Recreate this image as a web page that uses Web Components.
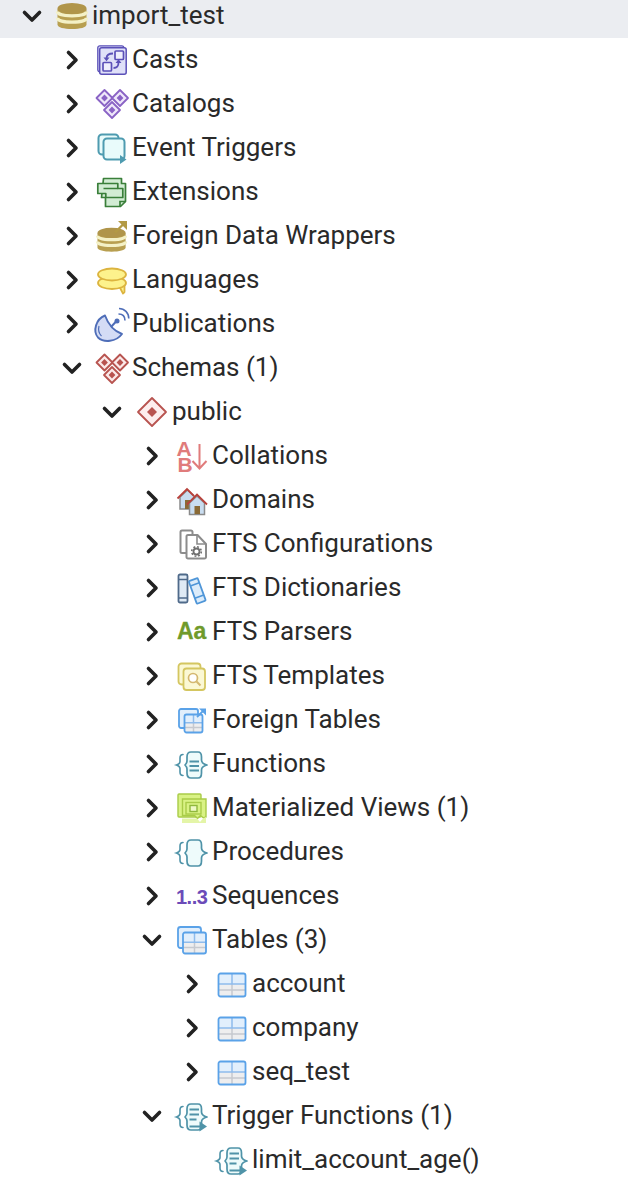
<!DOCTYPE html>
<html>
<head>
<meta charset="utf-8">
<style>
    html, body { margin: 0; padding: 0; background: #fff; overflow: hidden; }
</style>
</head>
<body>
<tree-view>
    <tree-node icon="database" open selected>import_test
        <tree-group slot="kids">
            <tree-node icon="casts">Casts</tree-node>
            <tree-node icon="catalogs">Catalogs</tree-node>
            <tree-node icon="eventTriggers">Event Triggers</tree-node>
            <tree-node icon="extensions">Extensions</tree-node>
            <tree-node icon="fdw">Foreign Data Wrappers</tree-node>
            <tree-node icon="languages">Languages</tree-node>
            <tree-node icon="publications">Publications</tree-node>
            <tree-node icon="schemas" open>Schemas (1)
                <tree-group slot="kids">
                    <tree-node icon="schema" open>public
                        <tree-group slot="kids">
                            <tree-node icon="collations">Collations</tree-node>
                            <tree-node icon="domains">Domains</tree-node>
                            <tree-node icon="ftsConfig">FTS Configurations</tree-node>
                            <tree-node icon="ftsDict">FTS Dictionaries</tree-node>
                            <tree-node icon="ftsParser">FTS Parsers</tree-node>
                            <tree-node icon="ftsTemplate">FTS Templates</tree-node>
                            <tree-node icon="foreignTables">Foreign Tables</tree-node>
                            <tree-node icon="functions">Functions</tree-node>
                            <tree-node icon="matViews">Materialized Views (1)</tree-node>
                            <tree-node icon="procedures">Procedures</tree-node>
                            <tree-node icon="sequences">Sequences</tree-node>
                            <tree-node icon="tables" open>Tables (3)
                                <tree-group slot="kids">
                                    <tree-node icon="table">account</tree-node>
                                    <tree-node icon="table">company</tree-node>
                                    <tree-node icon="table">seq_test</tree-node>
                                </tree-group>
                            </tree-node>
                            <tree-node icon="triggerFunctions" open>Trigger Functions (1)
                                <tree-group slot="kids">
                                    <tree-node icon="triggerFunction" leaf>limit_account_age()</tree-node>
                                </tree-group>
                            </tree-node>
                        </tree-group>
                    </tree-node>
                </tree-group>
            </tree-node>
        </tree-group>
    </tree-node>
</tree-view>

<script>
    // small helpers for repeated icon parts
    const diamond = (x, y, r, stroke, fill, inner) => `
        <path d="M${x} ${y - r}L${x + r} ${y}L${x} ${y + r}L${x - r} ${y}Z" fill="${fill}" stroke="${stroke}" stroke-width="1.8" stroke-linejoin="round"/>
        <path d="M${x} ${y - inner}L${x + inner} ${y}L${x} ${y + inner}L${x - inner} ${y}Z" fill="${stroke}"/>`;

    const grid = (x, y, w, h) => {
        const cx = x + w / 2, sep = y + h * 0.46, low = y + h * 0.72;
        return `
        <rect x="${x}" y="${y}" width="${w}" height="${h}" rx="2" fill="#e2effc"/>
        <rect x="${x}" y="${sep}" width="${w}" height="${h - h * 0.46}" fill="#eeeeef"/>
        <path d="M${x} ${low}H${x + w}M${cx} ${sep}V${y + h}" stroke="#c6c9cf" stroke-width="1.5"/>
        <path d="M${x} ${sep}H${x + w}M${cx} ${y}V${sep}" stroke="#8fbcec" stroke-width="1.5"/>
        <rect x="${x}" y="${y}" width="${w}" height="${h}" rx="2" fill="none" stroke="#5aa2e8" stroke-width="1.8"/>`;
    };

    const db = `
        <path d="M.5 8v15.500c0 3 6.500 4.500 14.500 4.500s14.500-1.500 14.500-4.500V8z" fill="#b89f50"/>
        <path d="M.5 10.500c0 3 6.500 4.300 14.500 4.300s14.500-1.300 14.500-4.300M.5 16.800c0 3 6.500 4.400 14.500 4.400s14.500-1.400 14.500-4.400" fill="none" stroke="#f4f1c6" stroke-width="3.300"/>
        <ellipse cx="15" cy="7.500" rx="14.500" ry="5.500" fill="#b0954a"/>`;

    const braceBody = `
        <path d="M6 5.500C3.500 5.500 3 7 3 9v3.500c0 1.800-1.300 2.800-3.500 3.500 2.200.7 3.500 1.700 3.500 3.500V23c0 2 .5 3.500 3 3.500" fill="none" stroke="#4f93a8" stroke-width="1.600" stroke-linecap="round"/>
        <path d="M14 3h7c3 0 3.500 2 3.500 5v3c0 2.500 1.500 4 5.500 5-4 1-5.500 2.500-5.500 5v3c0 3-.5 5-3.500 5h-7c-3 0-4-2-4-5v-4c0-2-1-3-2-4 1-1 2-2 2-4V8c0-3 1-5 4-5z" fill="#eefbfb" stroke="#4f93a8" stroke-width="1.700" stroke-linejoin="round"/>`;

    const funcLines = `<path d="M12.500 12.500h9.500M12.500 17h9.500M12.500 21.500h9.500" stroke="#4f93a8" stroke-width="2" fill="none"/>`;
    const triggerLines = `<path d="M12.500 8.500h9.500M12.500 13.500h9.500M12.500 18.500h7M12.500 25.500h10.500" stroke="#4f93a8" stroke-width="2" fill="none"/><path d="M22.500 20.500L30 25.500l-7.500 5z" fill="#4f93a8"/>`;

    const ICONS = {
        database: db,
        casts: `
            <rect x=".8" y=".8" width="26" height="26" rx="2" fill="#dfe0f8" stroke="#5b50b8" stroke-width="1.300"/>
            <rect x="2.700" y="2.700" width="26.500" height="26.500" rx="2" fill="#dfe0f8" stroke="#5b50b8" stroke-width="1.500"/>
            <rect x="18" y="6" width="8.500" height="8.500" rx="1" fill="#eeeefc" stroke="#5b50b8" stroke-width="1.700"/>
            <rect x="6" y="17.500" width="8.500" height="8.500" rx="1" fill="#eeeefc" stroke="#5b50b8" stroke-width="1.700"/>
            <path d="M9.500 13.500c0-3 2.500-5 6.500-5M21.500 17.500c0 3.500-2 5.500-5 5.500" fill="none" stroke="#5b50b8" stroke-width="1.800"/>
            <path d="M6.500 12.500l3 3.800 3-3.800zM18.500 18h6l-3-3.800z" fill="#5b50b8"/>`,
        catalogs: diamond(7.5, 9, 8, '#8a63c5', '#efe8fa', 3.4) + diamond(23, 9, 8, '#8a63c5', '#efe8fa', 3.4) + diamond(15, 21, 8, '#8a63c5', '#efe8fa', 3.4),
        eventTriggers: `
            <rect x="1.500" y="1.500" width="20" height="20" rx="3.500" fill="#e9fbfb" stroke="#4e9bb0" stroke-width="2"/>
            <rect x="6.500" y="5.500" width="21" height="21" rx="3.500" fill="#e9fbfb" stroke="#4e9bb0" stroke-width="2"/>
            <path d="M23 22l6.500 4.500-6.500 4.500z" fill="#4e9bb0"/>`,
        extensions: `
            <path d="M6.500 1.500h18v5h4v18l-5 5h-15v-9h-4z" fill="#d2ecd4" stroke="#3a7f3a" stroke-width="1.700" stroke-linejoin="round"/>
            <path d="M.8 6.500h20v5h5v9h-17v-4h-8z" fill="#d2ecd4" stroke="#3a7f3a" stroke-width="1.700" stroke-linejoin="round"/>
            <path d="M6.500 11.500h14M23 29.500v-5h5.500" fill="none" stroke="#3a7f3a" stroke-width="1.700"/>`,
        fdw: `
            <g transform="translate(0 5) scale(.97 .92)">${db}</g>
            <path d="M18 11.500l8-8" stroke="#b39a45" stroke-width="2.400"/>
            <path d="M21 0h9v9z" fill="#b39a45"/>`,
        languages: `
            <path d="M22 21l4 7.500 1.500-1.500V19z" fill="#fdf28c" stroke="#dcb43f" stroke-width="1.800" stroke-linejoin="round"/>
            <ellipse cx="15" cy="18" rx="14" ry="6" fill="#fdf28c" stroke="#dcb43f" stroke-width="1.800"/>
            <ellipse cx="15" cy="9.500" rx="14" ry="6" fill="#fdf28c" stroke="#dcb43f" stroke-width="1.800"/>`,
        publications: `
            <path d="M8 6.500C-1 10-4.500 22 1 28.500 7 34 19 33 25 25 17 22 11 15 8 6.500z" fill="#d4dcf5" stroke="#4f6eb8" stroke-width="1.900" stroke-linejoin="round"/>
            <path d="M2 17c-1 4 0 7.500 2.500 10" fill="none" stroke="#4f6eb8" stroke-width="1.200"/>
            <path d="M14 18l5.500-6" stroke="#4f6eb8" stroke-width="2"/>
            <circle cx="20" cy="12" r="2.500" fill="#4f6eb8"/>
            <path d="M21.500 5c4 0 6.500 2.500 6.500 6.500M22 -.5c5.500 0 9.800 4.300 9.800 10" fill="none" stroke="#4f6eb8" stroke-width="1.600"/>`,
        schemas: diamond(7.5, 9.5, 8, '#b85450', '#fbeaea', 3.4) + diamond(23, 9.5, 8, '#b85450', '#fbeaea', 3.4) + diamond(15, 22, 8, '#b85450', '#fbeaea', 3.4),
        schema: diamond(15, 15, 14, '#b85450', '#fdeeee', 5),
        // single text node, each glyph placed on its own line
        collations: `
            <text x="-.5 .5" y="15 31" font-family="Liberation Sans" font-weight="700" font-size="21" fill="#e07b7b">AB</text>
            <path d="M22.500 3v24M15.500 20l7 7.500 7-7.500" fill="none" stroke="#e07b7b" stroke-width="2"/>`,
        domains: `
            <path d="M3 12v12h15V12l-7.500-7z" fill="#c9ddf0" stroke="#8a8a8a" stroke-width="1.500"/>
            <path d="M.5 13.500L10 4l7 7" fill="none" stroke="#b8423c" stroke-width="1.800"/>
            <rect x="8" y="15" width="5" height="9" fill="#8a6a35"/>
            <path d="M12.500 18v11.500h15V18L20 11z" fill="#c9ddf0" stroke="#8a8a8a" stroke-width="1.500"/>
            <path d="M10 19.500L20 9.500l10 10" fill="none" stroke="#b8423c" stroke-width="1.800"/>
            <rect x="17.500" y="21" width="5.500" height="8" fill="#8a6a35"/>`,
        ftsConfig: `
            <path d="M5 1.500h9a1.500 1.500 0 0 1 1.500 1.500v21H5a1.500 1.500 0 0 1-1.500-1.500V3A1.500 1.500 0 0 1 5 1.500z" fill="#fff" stroke="#8c8c8c" stroke-width="2"/>
            <path d="M11 6h9.500l8.500 9v13a1.500 1.500 0 0 1-1.500 1.500H11A1.500 1.500 0 0 1 9.500 28V7.500A1.500 1.500 0 0 1 11 6z" fill="#fff" stroke="#8c8c8c" stroke-width="2" stroke-linejoin="round"/>
            <path d="M20 6v9h9" fill="none" stroke="#8c8c8c" stroke-width="1.600"/>
            <circle cx="19.500" cy="22.500" r="3" fill="none" stroke="#6f6f6f" stroke-width="1.800"/>
            <circle cx="19.500" cy="22.500" r="4.800" fill="none" stroke="#6f6f6f" stroke-width="1.600" stroke-dasharray="1.900 1.870"/>`,
        ftsDict: `
            <rect x="1.500" y="1.500" width="9" height="28" rx="1.500" fill="#dfeaf5" stroke="#4f6a8a" stroke-width="1.800"/>
            <path d="M1.500 6.500h9M1.500 25h9" stroke="#4f6a8a" stroke-width="1.600"/>
            <g transform="rotate(-20 20 18)">
                <rect x="15.500" y="6" width="9.500" height="24" rx="1" fill="#dcecfa" stroke="#4f96d8" stroke-width="1.800"/>
                <path d="M15.500 11h9.500M15.500 24h9.500" stroke="#4f96d8" stroke-width="1.600"/>
            </g>`,
        ftsParser: `<text x="0" y="22" font-family="Liberation Sans" font-weight="700" font-size="23" stroke="#6f9a2b" stroke-width=".3" fill="#6f9a2b">Aa</text>`,
        ftsTemplate: `
            <rect x="1.500" y="2.500" width="22" height="21" rx="3" fill="#fbf8d4" stroke="#d4c660" stroke-width="1.800"/>
            <rect x="6.500" y="7.500" width="21.500" height="21.500" rx="3" fill="#fbf8d4" stroke="#d4c660" stroke-width="1.800"/>
            <circle cx="16" cy="17" r="4.500" fill="#fff" stroke="#d4b870" stroke-width="1.700"/>
            <path d="M19.500 20.500l4 4" stroke="#d4b870" stroke-width="2"/>`,
        foreignTables: `
            <rect x="2" y="4" width="19" height="19" rx="2" fill="#e2effc" stroke="#5aa2e8" stroke-width="1.800"/>
            ${grid(7.500, 9.500, 18, 18)}
            <path d="M20 12l7-7" stroke="#5aa2e8" stroke-width="1.800"/>
            <path d="M22 3.500h7v7z" fill="#5aa2e8"/>`,
        functions: braceBody + funcLines,
        matViews: `
            <rect x="1" y="1" width="23" height="23" rx="1" fill="#d9f285" stroke="#a9cc48" stroke-width="1.400"/>
            <path d="M5.500 6h23.500v18l-2.500 1-3-2.500-3 3-3-3H5.500z" fill="#d9f285" stroke="#a9cc48" stroke-width="1.400"/>
            <rect x="9" y="9.500" width="15" height="11.500" fill="none" stroke="#a9cc48" stroke-width="1.400"/>
            <rect x="13" y="12.500" width="7" height="6" fill="#eef9c4" stroke="#8fb83c" stroke-width="1.400"/>
            <path d="M5 25.500h15l3 3.500 3-3.500 3-1.500v6H5z" fill="#e4f5a8"/>`,
        procedures: braceBody,
        sequences: `<text x="-1" y="23" font-family="Liberation Sans" font-weight="700" font-size="20" letter-spacing="-.5" fill="#6b4bb8">1..3</text>`,
        tables: `
            <rect x="1" y="2" width="23" height="21" rx="2.500" fill="#e2effc" stroke="#5aa2e8" stroke-width="1.800"/>
            ${grid(6, 7.500, 23, 21)}`,
        table: grid(1.500, 4.500, 27, 23),
        triggerFunctions: braceBody + triggerLines,
        triggerFunction: braceBody + triggerLines
    };

    customElements.define('node-icon', class extends HTMLElement {
        constructor() {
            super();
            this.attachShadow({mode: 'open'});
        }

        connectedCallback() {
            const body = ICONS[this.getAttribute('name')] || '';
            this.shadowRoot.innerHTML = `
            <style>
                :host { display: block; width: 30px; height: 30px; flex: none; }
                svg { display: block; overflow: visible; }
            </style>
            <svg width="30" height="30" viewBox="0 0 30 30">${body}</svg>`;
        }
    });

    customElements.define('tree-node', class extends HTMLElement {
        constructor() {
            super();
            this.attachShadow({mode: 'open'});
        }

        connectedCallback() {
            const open = this.hasAttribute('open');
            const leaf = this.hasAttribute('leaf');
            const points = open ? '4.500,8.500 12,16 19.500,8.500' : '8.500,4.500 16,12 8.500,19.500';
            this.shadowRoot.innerHTML = `
            <style>
                :host { display: block; }
                .row {
                    display: flex;
                    align-items: center;
                    height: 44px;
                    padding-left: 20px;
                    box-sizing: border-box;
                    white-space: nowrap;
                }
                :host([selected]) .row { background: #ebedf1; }
                .chevron { display: block; flex: none; margin-right: 13px; }
                .leaf { visibility: hidden; }
                .label { margin-left: 5px; margin-bottom: 2px; }
            </style>
            <div class="row">
                <svg class="chevron ${leaf ? 'leaf' : ''}" width="24" height="24" viewBox="0 0 24 24">
                    <polyline points="${points}" fill="none" stroke="#222" stroke-width="3.600" stroke-linecap="round" stroke-linejoin="round"/>
                </svg>
                <node-icon name="${this.getAttribute('icon')}"></node-icon>
                <span class="label"><slot></slot></span>
            </div>
            <slot name="kids"></slot>`;
        }
    });

    customElements.define('tree-group', class extends HTMLElement {
        constructor() {
            super();
            this.attachShadow({mode: 'open'}).innerHTML = `
            <style>
                :host { display: block; padding-left: 40px; }
            </style>
            <slot></slot>`;
        }
    });

    customElements.define('tree-view', class extends HTMLElement {
        constructor() {
            super();
            this.attachShadow({mode: 'open'}).innerHTML = `
            <style>
                :host {
                    display: block;
                    margin-top: -6px;
                    font-family: Roboto, "Liberation Sans", sans-serif;
                    font-size: 26px;
                    color: #2a2a2a;
                }
            </style>
            <slot></slot>`;
        }
    });
</script>
</body>
</html>
